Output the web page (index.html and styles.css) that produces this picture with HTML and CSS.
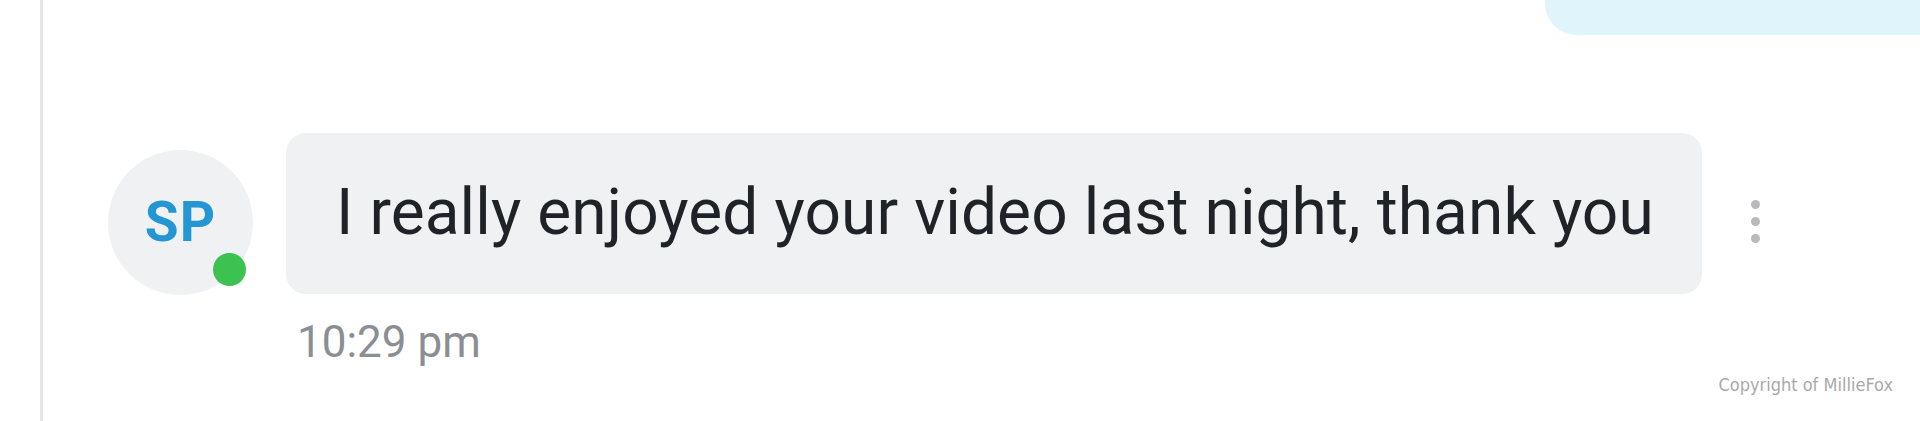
FILE: index.html
```html
<!DOCTYPE html>
<html>
<head>
  <meta charset="utf-8">
  <title>Chat</title>
  <link rel="stylesheet" href="styles.css">
</head>
<body>
  <div class="page">
    <div class="rule"></div>
    <div class="thread">
      <div class="outgoing"></div>
      <div class="message">
        <div class="avatar">
          <span class="initials">SP</span>
          <span class="online"></span>
        </div>
        <div class="body">
          <div class="bubble-row">
            <div class="bubble">I really enjoyed your video last night, thank you</div>
            <div class="more">
              <span class="dot"></span>
              <span class="dot"></span>
              <span class="dot"></span>
            </div>
          </div>
          <div class="time">10:29 pm</div>
        </div>
      </div>
      <div class="copyright">Copyright of MillieFox</div>
    </div>
  </div>
</body>
</html>
```

FILE: styles.css
```css
html, body {
  margin: 0;
  background: #ffffff;
  font-family: Roboto, "Liberation Sans", sans-serif;
}
.page {
  display: flex;
  height: 421px;
  overflow: hidden;
}
.rule {
  width: 3px;
  margin-left: 40px;
  background: #e4e5e7;
}
.thread {
  flex: 1;
  display: flex;
  flex-direction: column;
}
.outgoing {
  align-self: flex-end;
  width: 375px;
  height: 35px;
  background: #dff4fb;
  border-bottom-left-radius: 32px;
}
.message {
  display: flex;
  align-items: flex-start;
  margin-top: 98px;
  padding-left: 65px;
  gap: 33px;
}
.avatar {
  position: relative;
  width: 145px;
  height: 145px;
  margin-top: 17px;
  border-radius: 50%;
  background: #eff1f3;
  display: flex;
  align-items: center;
  justify-content: center;
}
.initials {
  color: #2396d3;
  font-weight: 700;
  font-size: 55px;
  margin-bottom: 2px;
  letter-spacing: 1px;
}
.online {
  position: absolute;
  left: 105px;
  top: 103px;
  width: 33px;
  height: 33px;
  border-radius: 50%;
  background: #3cc250;
}
.body {
  display: flex;
  flex-direction: column;
}
.bubble-row {
  display: flex;
  align-items: center;
}
.bubble {
  width: 1316px;
  padding: 42px 50px 44px 50px;
  background: #eff1f3;
  border-radius: 20px;
  color: #1f2327;
  font-size: 64px;
  letter-spacing: 0.1px;
  white-space: nowrap;
}
.more {
  display: flex;
  flex-direction: column;
  gap: 8px;
  margin-left: 49px;
  margin-top: 16px;
}
.dot {
  width: 9px;
  height: 9px;
  border-radius: 50%;
  background: #b9b9bd;
}
.time {
  margin-top: 22px;
  margin-left: 11px;
  color: #8b8e93;
  font-size: 44px;
}
.copyright {
  align-self: flex-end;
  margin-right: 27px;
  margin-top: 6px;
  color: #a9a9ab;
  font-family: "DejaVu Sans Condensed", "DejaVu Sans", sans-serif;
  font-size: 18px;
}
```
